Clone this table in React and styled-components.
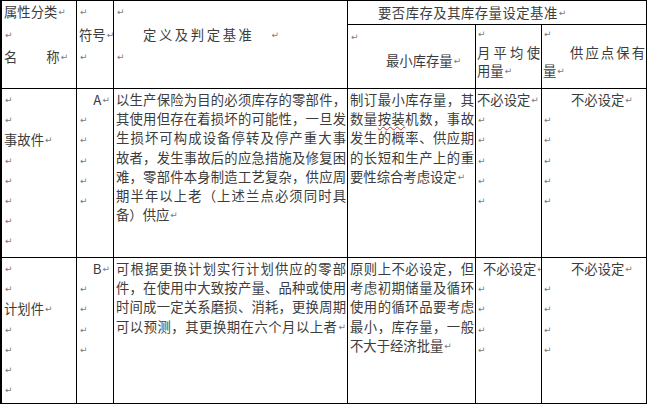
import React from "react";
import styled, { createGlobalStyle, css } from "styled-components";

const Global = createGlobalStyle`
  html, body { margin: 0; padding: 0; background: #fff; }
  body {
    font-family: "Noto Sans CJK SC", "Noto Sans", sans-serif;
    color: #3c3c3c;
  }
`;

const Sheet = styled.div`
  display: grid;
  grid-template-columns: 75px 37px 234px 128px 66px 105px;
  grid-template-rows: 24px 64px 169px 146px;
  width: max-content;
  border-top: 1px solid #000;
  border-left: 2px solid #000;
  font-size: 13.33px;
`;

const Cell = styled.div`
  box-sizing: border-box;
  grid-column: ${(p) => p.$col};
  grid-row: ${(p) => p.$row};
  border-right: 1px solid #000;
  border-bottom: 1px solid #000;
  padding: ${(p) => p.$pt ?? 1}px 1px 0 ${(p) => p.$pl ?? 2}px;
  line-height: ${(p) => p.$lh ?? 19.2}px;
  overflow: hidden;
`;

const Line = styled.div`
  white-space: nowrap;
  padding-left: ${(p) => p.$indent || 0}px;
  padding-right: ${(p) => p.$right || 0}px;
  text-align: ${(p) => p.$align || "left"};
  letter-spacing: ${(p) => p.$ls || 0}px;
  ${(p) =>
    p.$justify &&
    css`
      white-space: normal;
      text-align: justify;
      text-align-last: justify;
    `}
`;

const Mark = styled.span`
  font-family: "DejaVu Sans", sans-serif;
  font-size: 9px;
  letter-spacing: 0;
  color: #7a7a7a;
  vertical-align: 2px;
  margin-left: ${(p) => p.$gap || 1}px;
`;

const Spacer = styled.span`
  display: inline-block;
  width: ${(p) => p.$w}px;
`;

const Squiggle = styled.span`
  text-decoration: underline wavy #e02020;
  text-decoration-thickness: 1px;
  text-underline-offset: 2px;
`;

const P = () => <Mark>↵</Mark>;

const Empty = ({ n }) =>
  Array.from({ length: n }).map((_, i) => (
    <Line key={i}>
      <P />
    </Line>
  ));

const Para = ({ lines }) =>
  lines.map((t, i) =>
    i < lines.length - 1 ? (
      <Line key={i} $justify>
        {t}
      </Line>
    ) : (
      <Line key={i}>
        {t}
        <P />
      </Line>
    )
  );

export default function App() {
  return (
    <>
      <Global />
      <Sheet>
        {/* header left */}
        <Cell $col="1" $row="1 / 3" $lh={22.5} $pt={0}>
          <Line>
            属性分类
            <P />
          </Line>
          <Empty n={1} />
          <Line>
            名<Spacer $w={29} />称
            <P />
          </Line>
        </Cell>
        <Cell $col="2" $row="1 / 3" $lh={22.5} $pt={0}>
          <Empty n={1} />
          <Line>
            符号
            <P />
          </Line>
          <Empty n={1} />
        </Cell>
        <Cell $col="3" $row="1 / 3" $lh={22.5} $pt={0}>
          <Empty n={1} />
          <Line $indent={27} $ls={2.6}>
            定义及判定基准
            <Mark $gap={17}>↵</Mark>
          </Line>
          <Empty n={1} />
        </Cell>

        {/* header right */}
        <Cell $col="4 / 7" $row="1" $lh={23} $pt={0}>
          <Line $indent={28} $ls={0.5}>
            要否库存及其库存量设定基准
            <P />
          </Line>
        </Cell>
        <Cell $col="4" $row="2" $lh={24} $pt={0}>
          <Empty n={1} />
          <Line $indent={36}>
            最小库存量
            <P />
          </Line>
        </Cell>
        <Cell $col="5" $row="2" $lh={18.5} $pt={0} $pl={1}>
          <Empty n={1} />
          <Para lines={["月平均使", "用量"]} />
        </Cell>
        <Cell $col="6" $row="2" $lh={18.5} $pt={0} $pl={1}>
          <Empty n={1} />
          <Line $indent={27} $justify>
            供应点保有
          </Line>
          <Line>
            量<P />
          </Line>
        </Cell>

        {/* row A */}
        <Cell $col="1" $row="3">
          <Empty n={2} />
          <Line>
            事故件
            <P />
          </Line>
          <Empty n={5} />
        </Cell>
        <Cell $col="2" $row="3">
          <Line $align="right" $right={2}>
            A<P />
          </Line>
          <Empty n={5} />
        </Cell>
        <Cell $col="3" $row="3">
          <Para
            lines={[
              "以生产保险为目的必须库存的零部件，",
              "其使用但存在着损坏的可能性，一旦发",
              "生损坏可构成设备停转及停产重大事",
              "故者，发生事故后的应急措施及修复困",
              "难，零部件本身制造工艺复杂，供应周",
              "期半年以上老（上述兰点必须同时具",
              "备）供应",
            ]}
          />
        </Cell>
        <Cell $col="4" $row="3">
          <Para
            lines={[
              "制订最小库存量，其",
              <>
                数量<Squiggle>按装</Squiggle>机数，事故
              </>,
              "发生的概率、供应期",
              "的长短和生产上的重",
              "要性综合考虑设定",
            ]}
          />
        </Cell>
        <Cell $col="5" $row="3" $pl={1}>
          <Line>
            不必设定
            <P />
          </Line>
          <Empty n={5} />
        </Cell>
        <Cell $col="6" $row="3" $pl={1}>
          <Line $indent={28}>
            不必设定
            <P />
          </Line>
          <Empty n={5} />
        </Cell>

        {/* row B */}
        <Cell $col="1" $row="4">
          <Empty n={2} />
          <Line>
            计划件
            <P />
          </Line>
          <Empty n={4} />
        </Cell>
        <Cell $col="2" $row="4">
          <Line $align="right" $right={2}>
            B<P />
          </Line>
          <Empty n={4} />
        </Cell>
        <Cell $col="3" $row="4">
          <Line $justify>可根据更换计划实行计划供应的零部</Line>
          <Line $justify>件，在使用中大致按产量、品种或使用</Line>
          <Line $justify>时间成一定关系磨损、消耗，更换周期</Line>
          <Line $justify>
            可以预测，其更换期在六个月以上者
            <P />
          </Line>
        </Cell>
        <Cell $col="4" $row="4">
          <Para
            lines={[
              "原则上不必设定，但",
              "考虑初期储量及循环",
              "使用的循环品要考虑",
              "最小，库存量，一般",
              "不大于经济批量",
            ]}
          />
        </Cell>
        <Cell $col="5" $row="4" $pl={1}>
          <Line $indent={6}>
            不必设定
            <P />
          </Line>
          <Empty n={4} />
        </Cell>
        <Cell $col="6" $row="4" $pl={1}>
          <Line $indent={28}>
            不必设定
            <P />
          </Line>
          <Empty n={4} />
        </Cell>
      </Sheet>
    </>
  );
}
